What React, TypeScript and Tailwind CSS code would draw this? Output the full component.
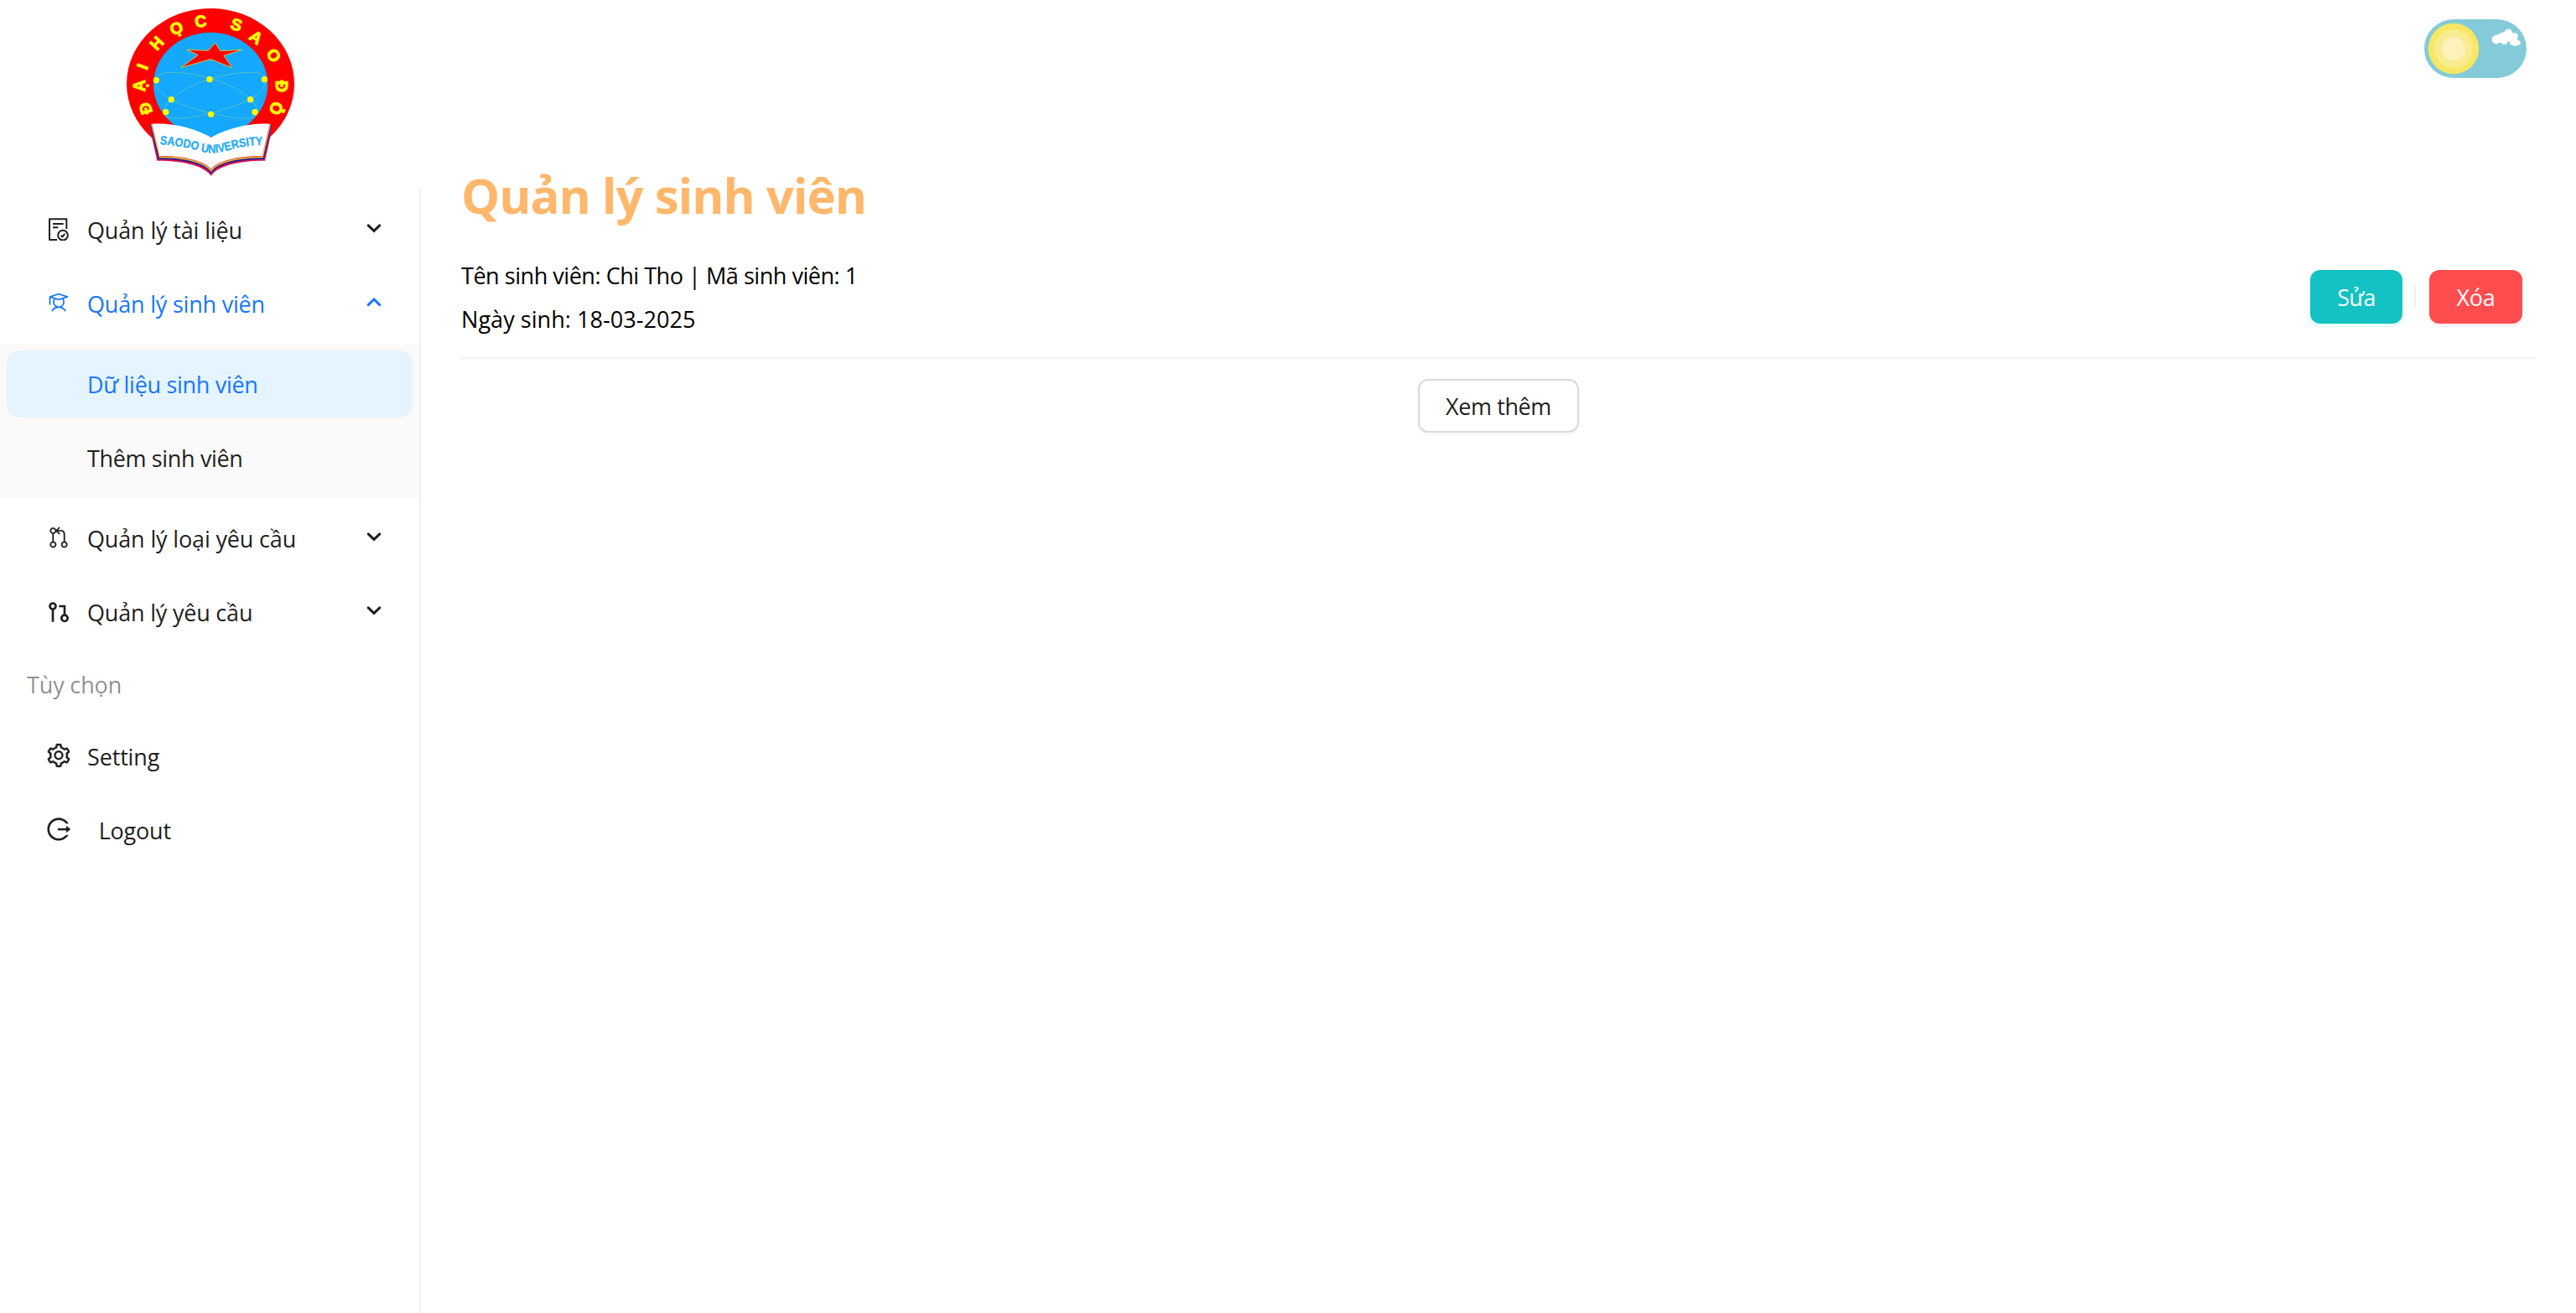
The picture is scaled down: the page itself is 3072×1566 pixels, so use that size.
import type { ReactNode } from 'react';
import { AiOutlineLogout, AiOutlineSetting } from 'react-icons/ai';
import { IoIosGitPullRequest } from 'react-icons/io';
import { PiStudent } from 'react-icons/pi';

const ringLetters: { char: string; x: number; y: number; angle: number }[] = [
  { char: 'Đ', x: 131, y: 388, angle: -107 },
  { char: 'Ạ', x: 110, y: 307, angle: -90 },
  { char: 'I', x: 120, y: 238, angle: -70 },
  { char: 'H', x: 171, y: 155, angle: -47 },
  { char: 'Ọ', x: 241, y: 101, angle: -26 },
  { char: 'C', x: 328, y: 76, angle: -6 },
  { char: 'S', x: 456, y: 88, angle: 18 },
  { char: 'A', x: 526, y: 133, angle: 36 },
  { char: 'O', x: 589, y: 198, angle: 58 },
  { char: 'Đ', x: 616, y: 309, angle: 90 },
  { char: 'Ỏ', x: 598, y: 388, angle: 108 },
];

const nodes: [number, number][] = [
  [169, 287], [360, 284], [556, 284], [223, 356],
  [506, 356], [203, 401], [365, 409], [522, 401],
];

function Logo() {
  return (
    <svg viewBox="63 30 600 600" className="size-[200px]">
      <ellipse cx="363" cy="300" rx="300" ry="270" fill="#ff0000" />
      <ellipse cx="363.500" cy="303" rx="204.500" ry="187" fill="#14a8ff" />
      <g fill="none" stroke="#5cc5b4" strokeWidth="2.500">
        <path d="M169 287C150 230 420 265 506 356C560 410 520 430 460 422C380 415 150 360 169 287Z" />
        <path d="M556 287C585 230 310 265 223 356C165 410 205 430 270 422C345 415 575 360 556 287Z" />
      </g>
      {nodes.map(([x, y]) => (
        <circle key={`${x}-${y}`} cx={x} cy={y} r="11" fill="#ffff00" />
      ))}
      <path
        d="M380 153L398 182L477 178L411 199L440 242L364 212L257 242L318 197L279 178L355 181Z"
        fill="#ff0000"
        stroke="#c8c83c"
        strokeWidth="3"
      />
      <g
        fill="#ffff00"
        stroke="#ffff00"
        strokeWidth="3"
        fontFamily="Liberation Sans, sans-serif"
        fontWeight="700"
        fontSize="58"
        textAnchor="middle"
      >
        {ringLetters.map(({ char, x, y, angle }) => (
          <text key={`${x}-${y}`} transform={`translate(${x} ${y}) rotate(${angle})`} y="20">
            {char}
          </text>
        ))}
      </g>
      <path d="M144 450L172 575C260 574 340 592 365 629C390 592 470 574 558 575L586 450L576 443L365 492L152 443Z" fill="#d4144c" />
      <path d="M147 448L176 570C262 569 342 586 365 621C388 586 468 569 554 570L582 448L576 443L365 492L152 443Z" fill="#2a1a9c" />
      <path d="M150 446L180 565C264 564 344 582 365 615C386 582 466 564 551 565L579 446L576 443L365 492L152 443Z" fill="#f4c430" />
      <path d="M152 444L183 561C266 560 346 578 365 610C384 578 464 560 548 561L577 444L365 492Z" fill="#e0503c" />
      <path d="M154 443C230 438 315 462 365 492C415 462 500 438 575 443L548 558C466 556 384 576 365 606C346 576 264 556 182 558Z" fill="#ffffff" />
      <path id="motto" d="M182 516C230 521 285 527 325 541C365 553 400 546 440 534C480 523 520 519 564 519" fill="none" />
      <text fill="#29abf0" stroke="#29abf0" strokeWidth="1" fontFamily="Liberation Sans, sans-serif" fontWeight="700" fontSize="43">
        <textPath href="#motto" textLength="374" lengthAdjust="spacingAndGlyphs">SAODO UNIVERSITY</textPath>
      </text>
    </svg>
  );
}

function ThemeToggle() {
  return (
    <button type="button" aria-label="Theme" className="flex h-[70px] w-[122px] items-center rounded-full bg-[#83cbd8]">
      <svg viewBox="0 0 122 70" className="h-[70px] w-[122px]">
        <circle cx="35" cy="35" r="30.300" fill="#f9e664" />
        <circle cx="35" cy="35" r="23" fill="#f7ec8f" />
        <circle cx="35" cy="35" r="14" fill="#fcf2ba" />
        <g fill="#ffffff">
          <circle cx="86" cy="24" r="5.300" />
          <circle cx="94" cy="21.500" r="4.500" />
          <circle cx="100.500" cy="15.500" r="4" />
          <circle cx="108" cy="20" r="3.800" />
          <ellipse cx="108.500" cy="28" rx="6.500" ry="3.800" />
          <circle cx="95.500" cy="26" r="4" />
          <path d="M86 19L97 14L104 15L111 20L111 25L106 30L100 26L92 28L86 28Z" />
        </g>
      </svg>
    </button>
  );
}

function DocumentCheckIcon() {
  return (
    <svg viewBox="0 0 84 84" className="size-7" fill="none" stroke="currentColor" strokeWidth="6">
      <path d="M70 42V6.500H9V81H36" strokeLinejoin="round" />
      <path d="M21 24H59M21 37H40" />
      <circle cx="57" cy="65" r="17.500" />
      <path d="M50 65L55.500 70L64 59.500" />
    </svg>
  );
}

function RequestIcon() {
  return (
    <svg viewBox="0 0 84 84" className="size-7" fill="none" stroke="currentColor" strokeWidth="8">
      <circle cx="21" cy="24" r="10.500" />
      <path d="M21 35V80" />
      <path d="M43 24H63V56" />
      <circle cx="63" cy="67" r="11" />
    </svg>
  );
}

function Chevron({ up = false }: { up?: boolean }) {
  return (
    <svg viewBox="0 0 18 12" className="mb-1 h-3 w-[18px]" fill="none" stroke="currentColor" strokeWidth="3" strokeLinecap="round">
      <path d={up ? 'M2.200 9.600L9 3L15.800 9.600' : 'M2.200 2.800L9 9.400L15.800 2.800'} />
    </svg>
  );
}

interface MenuItemProps {
  icon: ReactNode;
  label: string;
  tracking: string;
  expand?: 'up' | 'down';
  active?: boolean;
}

function MenuItem({ icon, label, tracking, expand, active = false }: MenuItemProps) {
  return (
    <div className={`mx-2 flex h-20 items-center pr-[37px] pl-12 ${active ? 'text-[#1677ff]' : 'text-[#1f1f1f]'}`}>
      <span className="mb-0.5 flex size-7 items-center justify-center text-[28px]">{icon}</span>
      <span className={`ml-5 flex-1 pt-0.5 whitespace-pre ${tracking}`}>{label}</span>
      {expand && <Chevron up={expand === 'up'} />}
    </div>
  );
}

function Sidebar() {
  return (
    <aside className="flex w-[502px] flex-col">
      <div className="flex h-[226px] items-start justify-center pt-2.5">
        <Logo />
      </div>
      <nav className="flex flex-1 flex-col gap-2 border-r-2 border-[#f0f0f0] pt-2">
        <MenuItem icon={<DocumentCheckIcon />} label="Quản lý tài liệu" tracking="tracking-[-0.150px]" expand="down" />
        <MenuItem icon={<PiStudent />} label="Quản lý sinh viên" tracking="tracking-[-0.200px]" expand="up" active />
        <div className="flex flex-col gap-2 bg-[#fafafa] py-2">
          <div className="mx-2 flex h-20 items-center rounded-2xl bg-[#e6f4ff] pl-24 text-[#1677ff]">
            <span className="pt-0.5 tracking-[-0.300px]">Dữ liệu sinh viên</span>
          </div>
          <div className="mx-2 flex h-20 items-center pl-24 text-[#1f1f1f]">
            <span className="pt-0.5 tracking-[-0.350px]">Thêm sinh viên</span>
          </div>
        </div>
        <MenuItem icon={<IoIosGitPullRequest stroke="currentColor" strokeWidth="6" />} label="Quản lý loại yêu cầu" tracking="tracking-[-0.150px]" expand="down" />
        <MenuItem icon={<RequestIcon />} label="Quản lý yêu cầu" tracking="tracking-[-0.200px]" expand="down" />
        <div className="flex h-[76px] items-center px-8 text-black/45">
          <span className="pt-0.5 tracking-[-0.150px]">Tùy chọn</span>
        </div>
        <MenuItem
          icon={<AiOutlineSetting className="size-8 shrink-0" stroke="currentColor" strokeWidth="8" />}
          label="Setting"
          tracking="tracking-[-0.150px]"
        />
        <MenuItem
          icon={<AiOutlineLogout className="size-8 shrink-0" stroke="currentColor" strokeWidth="8" />}
          label="  Logout"
          tracking="tracking-[-0.200px]"
        />
      </nav>
    </aside>
  );
}

export default function App() {
  return (
    <div className="flex min-h-[1566px] bg-white font-['Open_Sans',sans-serif] text-[27px] leading-[44px]">
      <Sidebar />
      <div className="flex flex-1 flex-col">
        <header className="flex h-[116px] justify-end pt-[23px] pr-[59px]">
          <ThemeToggle />
        </header>
        <main className="flex flex-col px-12">
          <h1 className="mt-[77px] text-[58px] leading-[80px] font-bold tracking-[-0.950px] text-[#ffb76b]">Quản lý sinh viên</h1>
          <section className="mt-[9px] flex items-center justify-between border-b-2 border-[#f0f0f0] pt-[25px] pr-4 pb-[23px]">
            <div className="flex flex-col gap-2 text-black">
              <p className="tracking-[-0.460px]">Tên sinh viên: Chi Tho | Mã sinh viên: 1</p>
              <p className="tracking-[0.050px]">Ngày sinh: 18-03-2025</p>
            </div>
            <div className="mb-0.5 flex items-center">
              <button type="button" className="h-16 w-[110px] rounded-xl bg-[#13c2c2] pt-0.5 tracking-[-0.700px] text-white shadow-[0_4px_0_#e6fffb]">Sửa</button>
              <span className="mr-4 ml-3.5 h-7 w-0.5 bg-[#f0f0f0]" />
              <button type="button" className="h-16 w-[111px] rounded-xl bg-[#ff4d4f] pt-0.5 tracking-[-0.300px] text-white shadow-[0_4px_0_#fff1f0]">Xóa</button>
            </div>
          </section>
          <button type="button" className="mt-6 h-16 w-48 self-center rounded-xl border-2 border-[#d9d9d9] bg-white pt-0.5 tracking-[-0.400px] text-[#1f1f1f] shadow-[0_4px_0_#fafafa]">Xem thêm</button>
        </main>
      </div>
    </div>
  );
}
